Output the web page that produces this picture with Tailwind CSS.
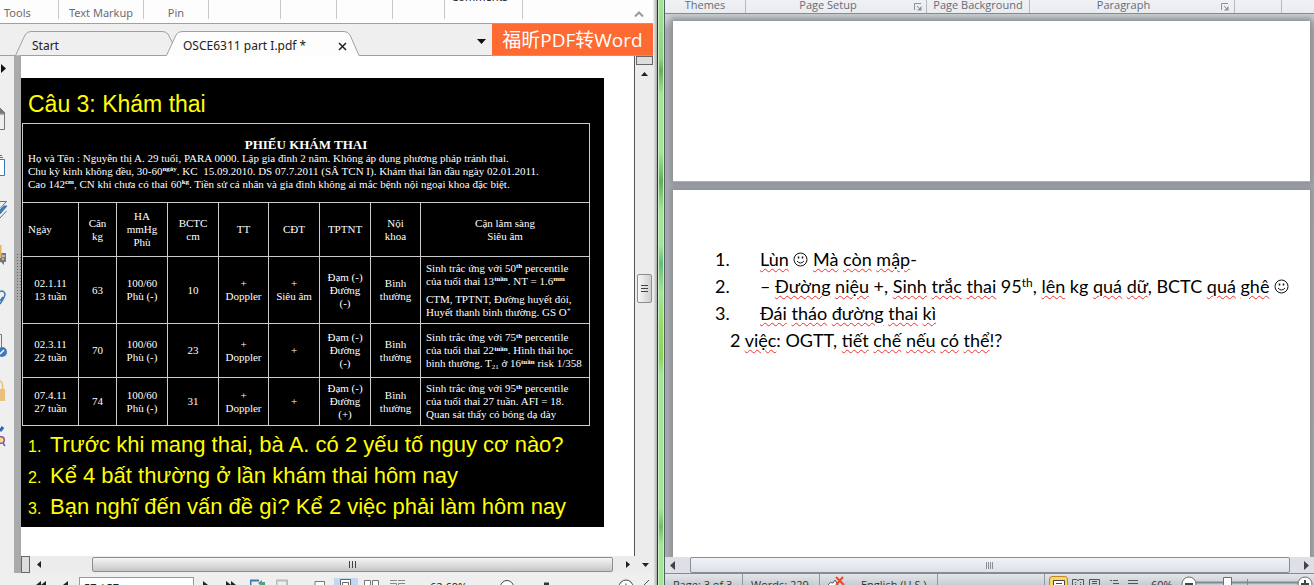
<!DOCTYPE html>
<html lang="vi">
<head>
<meta charset="utf-8">
<title>OSCE6311 part I.pdf</title>
<script src="https://cdn.jsdelivr.net/npm/@tailwindcss/browser@4"></script>
</head>
<body class="h-screen overflow-hidden bg-[#efefef]">
<div class="grid h-full grid-cols-[653fr_12px_649fr] overflow-hidden">

<!-- PDF reader -->
<section class="flex min-w-0 flex-col overflow-hidden bg-[#efefef] font-['Noto_Sans',sans-serif]">
  <header class="flex h-6 shrink-0 overflow-hidden border-b border-[#a0a0a0] bg-[#fdfdfd] text-[11px] leading-4 text-[#6b6b73]">
    <div class="flex h-[19px] flex-1">
      <div class="w-[59px] border-r border-[#c8c8c8] pt-[5px] pl-1">Tools</div>
      <div class="w-[85px] border-r border-[#c8c8c8] pt-[5px] text-center whitespace-nowrap">Text Markup</div>
      <div class="w-[65px] border-r border-[#c8c8c8] pt-[5px] text-center">Pin</div>
      <div class="w-[72px] border-r border-[#c8c8c8]"></div>
      <div class="w-14 border-r border-[#c8c8c8]"></div>
      <div class="w-14 border-r border-[#c8c8c8]"></div>
      <div class="w-[52px] border-r border-[#c8c8c8]"></div>
      <div class="w-[78px] overflow-hidden border-r border-[#c8c8c8] pr-2 text-center text-[#222]"><div class="-mt-[11px]">Comments</div></div>
    </div>
    <button class="flex w-7 items-center justify-center" aria-label="Collapse ribbon"><svg width="10" height="6" viewBox="0 0 10 6" class="mt-1" fill="none" stroke="#999" stroke-width="2"><path d="M1 5.5 5 1.5 9 5.500"/></svg></button>
  </header>

  <nav class="flex h-8 shrink-0 border-b border-[#a0a0a0] text-[13px] text-[#222]">
    <button class="relative ml-[15px] h-8 w-[157px] pt-3 pl-[17px] text-left">
      <svg class="absolute top-0 left-0" width="159" height="32" fill="#efefef" stroke="#a0a0a0"><path d="M.5 31.500 10 11Q12 7.500 16 7.500H147Q151 7.500 153 10L158 20"/></svg>
      <span class="relative text-xs">Start</span>
    </button>
    <div class="relative -ml-[6px] flex h-8 w-[194px] items-center pt-3 pl-[17px]">
      <svg class="absolute top-0 left-0" width="194" height="33"><path d="M.5 31.500 10 11Q12 7.500 16 7.500H178Q182 7.500 184 11L193 31.500V33H0Z" fill="#fdfdfd"/><path d="M.5 31.500 10 11Q12 7.500 16 7.500H178Q182 7.500 184 11L193 31.500" fill="none" stroke="#a0a0a0"/></svg>
      <button class="relative w-[155px] text-left text-xs whitespace-nowrap">OSCE6311 part I.pdf *</button>
      <button class="relative" aria-label="Close tab"><svg width="9" height="9" viewBox="0 0 9 9" stroke="#222" stroke-width="1.500"><path d="M1 1 8 8M8 1 1 8"/></svg></button>
    </div>
    <div class="flex flex-1 items-center justify-end pt-1 pr-[6px]"><button aria-label="Tab list"><svg width="9" height="5"><path d="M0 0H9L4.500 5Z" fill="#111"/></svg></button></div>
    <a href="#" class="flex h-[31px] w-[161px] items-center justify-center bg-[#ff6a33] pt-px font-['Open_Sans','Noto_Sans_CJK_SC',sans-serif] text-[19px] whitespace-nowrap text-white">福昕PDF转Word</a>
  </nav>

  <div class="flex min-h-0 flex-1">
    <aside class="flex w-[14px] shrink-0 flex-col overflow-hidden">
      <button class="h-10 shrink-0" aria-label="Expand panel"><svg width="8" height="40" viewBox="0 56 8 40"><path d="M1 64V73L6 68.500Z" fill="#111"/></svg></button>
      <button class="h-[45px] shrink-0" aria-label="Bookmarks"><svg width="8" height="45" viewBox="0 96 8 45" fill="none" stroke="#777"><path d="M0 109 5 114H0M4.500 113V129.500H0"/><path d="M0 108V113H5Z" fill="#777"/></svg></button>
      <button class="h-[45px] shrink-0" aria-label="Pages"><svg width="8" height="45" viewBox="0 141 8 45"><path d="M0 155.500H2M0 157.500H3M0 159.500H4.500V175.500H0" fill="none" stroke="#3f79b5"/><path d="M0 160H4V175H0Z" fill="#fff"/></svg></button>
      <button class="h-[45px] shrink-0" aria-label="Layers"><svg width="8" height="45" viewBox="0 186 8 45" fill="none" stroke="#3f79b5"><path d="M0 201.500H6.500L0 208.500M6.500 211 0 218"/><path d="M7 206 0 214V210L4 206Z" fill="#3f79b5"/></svg></button>
      <button class="h-[45px] shrink-0" aria-label="Comments"><svg width="8" height="45" viewBox="0 231 8 45"><path d="M0 253H6V262H4V265L1 262H0Z" fill="#777"/><path d="M0 245H1.500V258H0Z" fill="#ecb45c"/><path d="M2 256H5M2 259H4" stroke="#fff"/></svg></button>
      <button class="h-[45px] shrink-0" aria-label="Attachments"><svg width="8" height="45" viewBox="0 276 8 45" fill="none" stroke="#3f79b5" stroke-width="1.500"><path d="M0 291.500Q4 290 5 294 5 297 0 304M0 301 3 297"/></svg></button>
      <button class="h-[45px] shrink-0" aria-label="Signatures"><svg width="8" height="45" viewBox="0 321 8 45"><path d="M0 334.500H1.500V347" fill="none" stroke="#777"/><circle cx="2" cy="352" r="5" fill="#3f79b5"/><path d="M0 354 4 350" stroke="#fff" stroke-width="1.500"/></svg></button>
      <button class="h-[45px] shrink-0" aria-label="Security"><svg width="8" height="45" viewBox="0 366 8 45"><path d="M0 381Q3 382 2.500 389" fill="none" stroke="#ebbf7c" stroke-width="1.500"/><path d="M0 389H5V401H0Z" fill="#ebbf7c"/></svg></button>
      <button class="h-[45px] shrink-0" aria-label="Search signatures"><svg width="8" height="45" viewBox="0 411 8 45"><path d="M0 431 3 427" stroke="#2868b0" stroke-width="3"/><circle cx="1" cy="440" r="3.300" fill="#f7dd7d" stroke="#8058a8" stroke-width="1.500"/><path d="M3 443 5 446" stroke="#8058a8" stroke-width="1.500"/></svg></button>
    </aside>
    <div class="mb-3 flex w-[7px] shrink-0 justify-end bg-[#a9aaac] pt-[198px]"><svg width="4" height="46"><path d="M.5 0V46M3.500 0V46" stroke="#696969" stroke-dasharray="1 2"/></svg></div>

    <div class="flex min-w-0 flex-1 flex-col">
      <div class="flex min-h-0 flex-1">
        <main class="min-w-0 flex-1 overflow-hidden border-r border-[#555] bg-white pt-[22px]">
          <article class="h-[449px] w-[583px] bg-black pt-3 font-['Liberation_Sans',sans-serif] text-[#ffff00]">
            <h1 class="h-[33px] pl-[7px] text-[23px] leading-7">Câu 3: Khám thai</h1>
            <table class="ml-px w-[568px] table-fixed border-collapse border border-[#ccc] font-['Liberation_Serif',serif] text-[11px] leading-[13px] text-white [&_sup]:text-[7px] [&_sup]:leading-none [&_sup]:font-bold [&_td]:border [&_td]:border-[#ccc] [&_td]:p-0 [&_th]:border [&_th]:border-[#ccc] [&_th]:p-0 [&_th]:font-normal">
              <colgroup><col class="w-[56px]"><col class="w-[38px]"><col class="w-[51px]"><col class="w-[51px]"><col class="w-[50px]"><col class="w-[51px]"><col class="w-[51px]"><col class="w-[50px]"><col></colgroup>
              <thead>
                <tr class="h-[79px]"><th colspan="9"><div class="pt-[2px] text-center text-[13px] leading-[14px] font-bold">PHIẾU KHÁM THAI</div>
                  <div class="pl-[5px] text-left whitespace-nowrap">Họ và Tên : Nguyễn thị A. 29 tuổi, PARA 0000. Lập gia đình 2 năm. Không áp dụng phương pháp tránh thai.<br>Chu kỳ kinh không đều, 30-60<sup>ngày</sup>. KC &nbsp;15.09.2010. DS 07.7.2011 (SÂ TCN I). Khám thai lần đầu ngày 02.01.2011.<br>Cao 142<sup>cm</sup>, CN khi chưa có thai 60<sup>kg</sup>. Tiền sử cá nhân và gia đình không ai mắc bệnh nội ngoại khoa đặc biệt.</div></th></tr>
                <tr class="h-[54px] text-center"><th class="text-left"><span class="pl-[5px]">Ngày</span></th><th>Cân<br>kg</th><th>HA<br>mmHg<br>Phù</th><th>BCTC<br>cm</th><th>TT</th><th>CĐT</th><th>TPTNT</th><th>Nội<br>khoa</th><th>Cận lâm sàng<br>Siêu âm</th></tr>
              </thead>
              <tbody class="text-center">
                <tr class="h-[67px]"><td>02.1.11<br>13 tuần</td><td>63</td><td>100/60<br>Phù (-)</td><td>10</td><td>+<br>Doppler</td><td>+<br>Siêu âm</td><td>Đạm (-)<br>Đường<br>(-)</td><td>Bình<br>thường</td><td class="text-left whitespace-nowrap"><p class="mb-[5px] pl-[5px]">Sinh trắc ứng với 50<sup>th</sup> percentile<br>của tuổi thai 13<sup>tuần</sup>. NT = 1.6<sup>mm</sup></p><p class="pl-[5px]">CTM, TPTNT, Đường huyết đói,<br>Huyết thanh bình thường. GS O<sup>+</sup></p></td></tr>
                <tr class="h-[54px]"><td>02.3.11<br>22 tuần</td><td>70</td><td>100/60<br>Phù (-)</td><td>23</td><td>+<br>Doppler</td><td>+</td><td>Đạm (-)<br>Đường<br>(-)</td><td>Bình<br>thường</td><td class="text-left whitespace-nowrap"><p class="pl-[5px]">Sinh trắc ứng với 75<sup>th</sup> percentile<br>của tuổi thai 22<sup>tuần</sup>. Hình thái học<br>bình thường. T<sub class="text-[7px] leading-none">21</sub> ở 16<sup>tuần</sup> risk 1/358</p></td></tr>
                <tr class="h-[48px]"><td>07.4.11<br>27 tuần</td><td>74</td><td>100/60<br>Phù (-)</td><td>31</td><td>+<br>Doppler</td><td>+</td><td>Đạm (-)<br>Đường<br>(+)</td><td>Bình<br>thường</td><td class="text-left whitespace-nowrap"><p class="pl-[5px]">Sinh trắc ứng với 95<sup>th</sup> percentile<br>của tuổi thai 27 tuần. AFI = 18.<br>Quan sát thấy có bóng dạ dày</p></td></tr>
              </tbody>
            </table>
            <ol class="pt-[3px] pl-[7px] text-[22px] leading-[31px] whitespace-nowrap">
              <li class="flex items-baseline"><span class="w-[22px] text-base leading-none">1.</span>Trước khi mang thai, bà A. có 2 yếu tố nguy cơ nào?</li>
              <li class="flex items-baseline"><span class="w-[22px] text-base leading-none">2.</span>Kể 4 bất thường ở lần khám thai hôm nay</li>
              <li class="flex items-baseline"><span class="w-[22px] text-base leading-none">3.</span>Bạn nghĩ đến vấn đề gì? Kể 2 việc phải làm hôm nay</li>
            </ol>
          </article>
        </main>
        <div class="flex w-[18px] shrink-0 flex-col items-center bg-[#ececec]">
          <div class="h-[9px] w-[17px] border border-[#666] bg-[#ddd]"></div>
          <button class="flex h-[18px] items-center" aria-label="Scroll up"><svg width="7" height="4"><path d="M0 4H7L3.500 0Z" fill="#222"/></svg></button>
          <div class="mt-[191px] flex h-[29px] w-[15px] items-center justify-center rounded-[2px] border border-[#8e8e8e] bg-linear-to-r from-[#f7f7f7] to-[#cfcfd1]"><svg width="7" height="8"><path d="M0 .5H7M0 3.500H7M0 6.500H7" stroke="#444"/></svg></div>
        </div>
      </div>
      <div class="flex h-[17px] shrink-0 bg-[#ececec]">
        <div class="w-[9px] border border-[#666] bg-[#ddd]"></div>
        <button class="flex w-[17px] items-center justify-center" aria-label="Scroll left"><svg width="4" height="7"><path d="M4 0V7L0 3.500Z" fill="#222"/></svg></button>
        <div class="mt-px ml-[45px] flex h-[15px] flex-1 items-center justify-center rounded-[2px] border border-[#8e8e8e] bg-linear-to-b from-[#f5f5f5] to-[#c6c6c9]"><svg width="8" height="7"><path d="M.5 0V7M3.500 0V7M6.500 0V7" stroke="#444"/></svg></div>
        <button class="flex w-[29px] items-center justify-center" aria-label="Scroll right"><svg width="4" height="7"><path d="M0 0V7L4 3.500Z" fill="#222"/></svg></button>
        <button class="flex w-[11px] items-center" aria-label="Scroll down"><svg width="7" height="4"><path d="M0 0H7L3.500 4Z" fill="#222"/></svg></button>
      </div>
      <footer class="flex h-3 shrink-0 items-start overflow-hidden text-[11px] leading-3 text-[#222]">
        <button class="mt-[8px] ml-[15px] w-[27px]" aria-label="First page"><svg width="10" height="8"><path d="M5 0V8L0 4ZM10 0V8L5 4Z" fill="#222"/></svg></button>
        <button class="mt-[8px] w-4" aria-label="Previous page"><svg width="5" height="8"><path d="M5 0V8L0 4Z" fill="#222"/></svg></button>
        <input aria-label="Page" value="57 / 57" class="mt-1 h-5 w-[115px] shrink-0 border border-[#999] bg-white px-1">
        <button class="mt-[8px] ml-[9px] w-[23px]" aria-label="Next page"><svg width="5" height="8"><path d="M0 0V8L5 4Z" fill="#222"/></svg></button>
        <button class="mt-[8px] w-[24px]" aria-label="Last page"><svg width="10" height="8"><path d="M0 0V8L5 4ZM5 0V8L10 4Z" fill="#222"/></svg></button>
        <button class="mt-[6px] w-[26px]" aria-label="Previous view"><svg width="16" height="8" fill="none"><path d="M.5 8V1.500H9" stroke="#3f79b5" stroke-width="2"/><path d="M8 4 12 1V3H15V6H12V8Z" fill="#5c9a84"/></svg></button>
        <button class="mt-[6px] w-[38px]" aria-label="Next view"><svg width="12" height="8"><path d="M.5 8V1.500H11V8" fill="none" stroke="#bbb" stroke-width="2"/></svg></button>
        <button class="mt-[6px] w-5" aria-label="Single page"><svg width="12" height="8"><path d="M1 8V2.500H10.500V8" fill="#fff" stroke="#777"/></svg></button>
        <button class="mt-[5px] flex h-5 w-6 items-start justify-center bg-[#c3d6f2]" aria-label="Continuous"><svg width="12" height="8"><path d="M.5 8V1.500H10.500V8M2.500 8V4.500H8.500V8" fill="#fff" stroke="#666"/></svg></button>
        <button class="mt-[6px] ml-[6px] w-[26px]" aria-label="Facing"><svg width="16" height="8"><path d="M.5 8V1.500H6.500V8M8.500 8V1.500H14.500V8" fill="#fff" stroke="#777"/></svg></button>
        <button class="mt-[6px] w-[40px]" aria-label="Facing continuous"><svg width="16" height="8"><path d="M0 1.500H7M8 1.500H15M0 4.500H6.500V8M8.500 8V4.500H15" fill="none" stroke="#888"/></svg></button>
        <span class="mt-[8px] w-[69px]">62.69%</span>
        <button class="mt-[6px] w-[45px]" aria-label="Zoom out"><svg width="16" height="8"><circle cx="8" cy="8" r="6.500" fill="#fff" stroke="#444"/></svg></button>
        <svg class="mt-[9px] mr-[68px]" width="6" height="3"><path d="M0 .500H5V3H0Z" fill="#333"/></svg>
        <button class="mt-[6px] w-[26px]" aria-label="Zoom in"><svg width="16" height="8"><path d="M1 8A7 7 0 0 1 15 8" fill="#fff" stroke="#444"/><path d="M8 4.500V8" stroke="#444"/></svg></button>
        <svg class="mt-[7px]" width="5" height="5"><path d="M5 0 0 5" stroke="#555"/></svg>
      </footer>
    </div>
  </div>
</section>

<!-- window frames and the desktop between them -->
<div class="flex">
  <div class="w-1 bg-linear-to-r from-[#f4f4f4] to-[#aaa]"></div>
  <div class="w-px bg-[#333]"></div>
  <div class="w-[6px] border-x border-[#cbeec4]">
    <div class="h-full bg-[linear-gradient(to_bottom,#a2e698_0%,#8fd486_10%,#66ad5c_12%,#a2e698_16%,#a2e698_26%,#5fb05a_31%,#a2e698_36%,#a2e698_42%,#62bd7c_45%,#a2e698_50%,#94dc62_56%,#8ad45c_61%,#a2e698_64%,#a2e698_87%,#72bd68_90%,#a2e698_93%)]"></div>
  </div>
  <div class="w-px bg-[#555c60]"></div>
</div>

<!-- Word processor -->
<section class="flex min-w-0 flex-col overflow-hidden bg-[#c8ccd1] font-['Open_Sans',sans-serif]">
  <header class="flex h-[14px] shrink-0 overflow-hidden border-b border-[#858a90] bg-linear-to-b from-[#eff1f4] to-[#e9ecef] text-[11px] leading-[10px] whitespace-nowrap text-[#666c78]">
    <div class="w-[81px] border-r border-[#b4b9bf] text-center">Themes</div>
    <div class="flex w-[181px] border-r border-[#b4b9bf]"><span class="flex-1 pr-1 text-center">Page Setup</span><button class="mr-1" aria-label="Page setup options"><svg width="8" height="8" viewBox="0 0 8 8"><path d="M.5 7V.5H7" fill="none" stroke="#8b9099"/><path d="M3 3 6 6" stroke="#8b9099"/><path d="M7.500 3V7.500H3Z" fill="#8b9099"/></svg></button></div>
    <div class="w-[103px] border-r border-[#b4b9bf] text-center">Page Background</div>
    <div class="flex w-[205px] border-r border-[#b4b9bf]"><span class="flex-1 pr-1 text-center">Paragraph</span><button class="mr-[5px]" aria-label="Paragraph options"><svg width="8" height="8" viewBox="0 0 8 8"><path d="M.5 7V.5H7" fill="none" stroke="#8b9099"/><path d="M3 3 6 6" stroke="#8b9099"/><path d="M7.500 3V7.500H3Z" fill="#8b9099"/></svg></button></div>
    <div class="w-[47px] border-r border-[#b4b9bf]"></div>
    <div class="flex-1"></div>
  </header>

  <main class="flex min-h-0 flex-1 flex-col gap-2 overflow-hidden bg-linear-to-b from-[#cdd1d5] from-1% via-[#a8adb3] via-3% to-[#a9aeb5] pt-[7px] pr-1 pl-2">
    <div class="h-[161px] shrink-0 border-b border-[#b0b4b8] bg-white shadow-[0_0_6px_3px_#8c9095]"></div>
    <article class="flex-1 bg-white pt-[56px] pl-[42px] font-[Lato,'Open_Sans',sans-serif] text-[18px] leading-[27px] whitespace-nowrap text-black shadow-[0_0_6px_3px_#8c9095] [&_u]:decoration-[#f03030] [&_u]:decoration-wavy [&_u]:decoration-1 [&_u]:underline-offset-2">
      <ol>
        <li class="flex"><span class="w-[45px]">1.</span><span><u>Lùn</u> <svg class="inline align-[-1px]" width="15" height="15" viewBox="0 0 15 15" fill="none" stroke="#111"><circle cx="7.500" cy="7.500" r="6.500"/><path d="M4 9Q7.500 13 11 9"/><path d="M5.500 4.500V6.500M9.500 4.500V6.500" stroke-width="1.500"/></svg> <u>Mà</u> <u>còn</u> <u>mập</u>-</span></li>
        <li class="flex"><span class="w-[45px]">2.</span><span>– <u>Đường</u> <u>niệu</u> +, <u>Sinh</u> <u>trắc</u> <u>thai</u> 95<sup class="text-xs leading-none">th</sup>, <u>lên</u> kg <u>quá</u> <u>dữ</u>, BCTC <u>quá</u> <u>ghê</u> <svg class="inline align-[-1px]" width="15" height="15" viewBox="0 0 15 15" fill="none" stroke="#111"><circle cx="7.500" cy="7.500" r="6.500"/><path d="M4 9Q7.500 13 11 9"/><path d="M5.500 4.500V6.500M9.500 4.500V6.500" stroke-width="1.500"/></svg></span></li>
        <li class="flex"><span class="w-[45px]">3.</span><span><u>Đái</u> <u>tháo</u> <u>đường</u> <u>thai</u> <u>kì</u></span></li>
      </ol>
      <p class="pl-[15px]">2 <u>việc</u>: OGTT, <u>tiết</u> <u>chế</u> <u>nếu</u> <u>có</u> <u>thể</u>!?</p>
    </article>
  </main>

  <div class="flex h-[17px] shrink-0 border-b border-[#858a90] bg-[#dde1e7]">
    <button class="flex w-[25px] items-center pl-[5px]" aria-label="Scroll left"><svg width="5" height="9"><path d="M5 0V9L0 4.500Z" fill="#444"/></svg></button>
    <div class="flex h-4 flex-1 items-center justify-center rounded-[2px] border border-[#858f9a] bg-linear-to-b from-[#f0f3f8] to-[#dde1e7]"><svg width="8" height="7"><path d="M.5 0V7M2.500 0V7M4.500 0V7M6.500 0V7" stroke="#888e96"/></svg></div>
    <button class="flex w-6 items-center justify-end pr-[5px]" aria-label="Scroll right"><svg width="5" height="9"><path d="M0 0V9L5 4.500Z" fill="#444"/></svg></button>
  </div>
  <footer class="flex h-[11px] shrink-0 items-start overflow-hidden bg-linear-to-b from-[#e3e6e9] to-[#c9cdd2] pr-px text-[11px] leading-[15px] whitespace-nowrap text-[#333]">
    <div class="h-4 w-[78px] shrink-0 border-r border-[#92979d] pt-[3px] pl-2">Page: 3 of 3</div>
    <div class="h-4 w-[77px] shrink-0 border-r border-[#92979d] pt-[3px] pl-2">Words: 229</div>
    <svg class="mt-[2px] ml-[8px] shrink-0" width="17" height="9"><path d="M0 9Q2 5 5 7L7 4 10 9" fill="#fff" stroke="#556"/><path d="M8 1 16 9M15 1 8 9" stroke="#e84a2c" stroke-width="2"/></svg>
    <div class="h-4 w-[93px] shrink-0 border-r border-[#92979d] pt-[3px] pl-4">English (U.S.)</div>
    <div class="h-4 flex-1 border-r border-[#92979d]"></div>
    <button class="mt-[2px] ml-1 flex h-4 w-[19px] shrink-0 items-start justify-center rounded-[3px] border border-[#c08a2c] bg-[#fbd665]" aria-label="Print layout"><svg class="mt-[2px]" width="12" height="8"><path d="M.5 8V1.500H11.500V8" fill="#fff" stroke="#444"/><path d="M3 4.500H9M3 6.500H9" stroke="#444"/></svg></button>
    <svg class="mt-[5px] mr-3 ml-1 shrink-0" width="67" height="6" fill="none" stroke="#555"><path d="M.5 6V.5H5L6 2 7 .5H11.500V6M3 3.500H4M8 3.500H9M3 5.500H4M8 5.500H9M17.500 6V.5H27.500V6M20 2.500H25M20 4.500H25M38 1.500H40M41 1.500H46M41 4.500H47M56 1.500H66M56 4.500H66"/></svg>
    <span class="w-[30px] shrink-0 pt-[3px]">60%</span>
    <svg class="mt-[2px] shrink-0" width="132" height="9"><path d="M15 6.500H117" stroke="#828a98" stroke-width="2"/><circle cx="8" cy="8" r="7" fill="#fff" stroke="#666e7a"/><path d="M4 8H12" stroke="#444" stroke-width="2"/><path d="M42.500 9V1.500H50.500V9" fill="#fff" stroke="#666e7a"/><path d="M66.500 3V9" stroke="#828a98"/><circle cx="124" cy="8" r="7" fill="#fff" stroke="#666e7a"/><path d="M120 8H128M124 4V9" stroke="#444" stroke-width="2"/></svg>
  </footer>
</section>
</div>
</body>
</html>
